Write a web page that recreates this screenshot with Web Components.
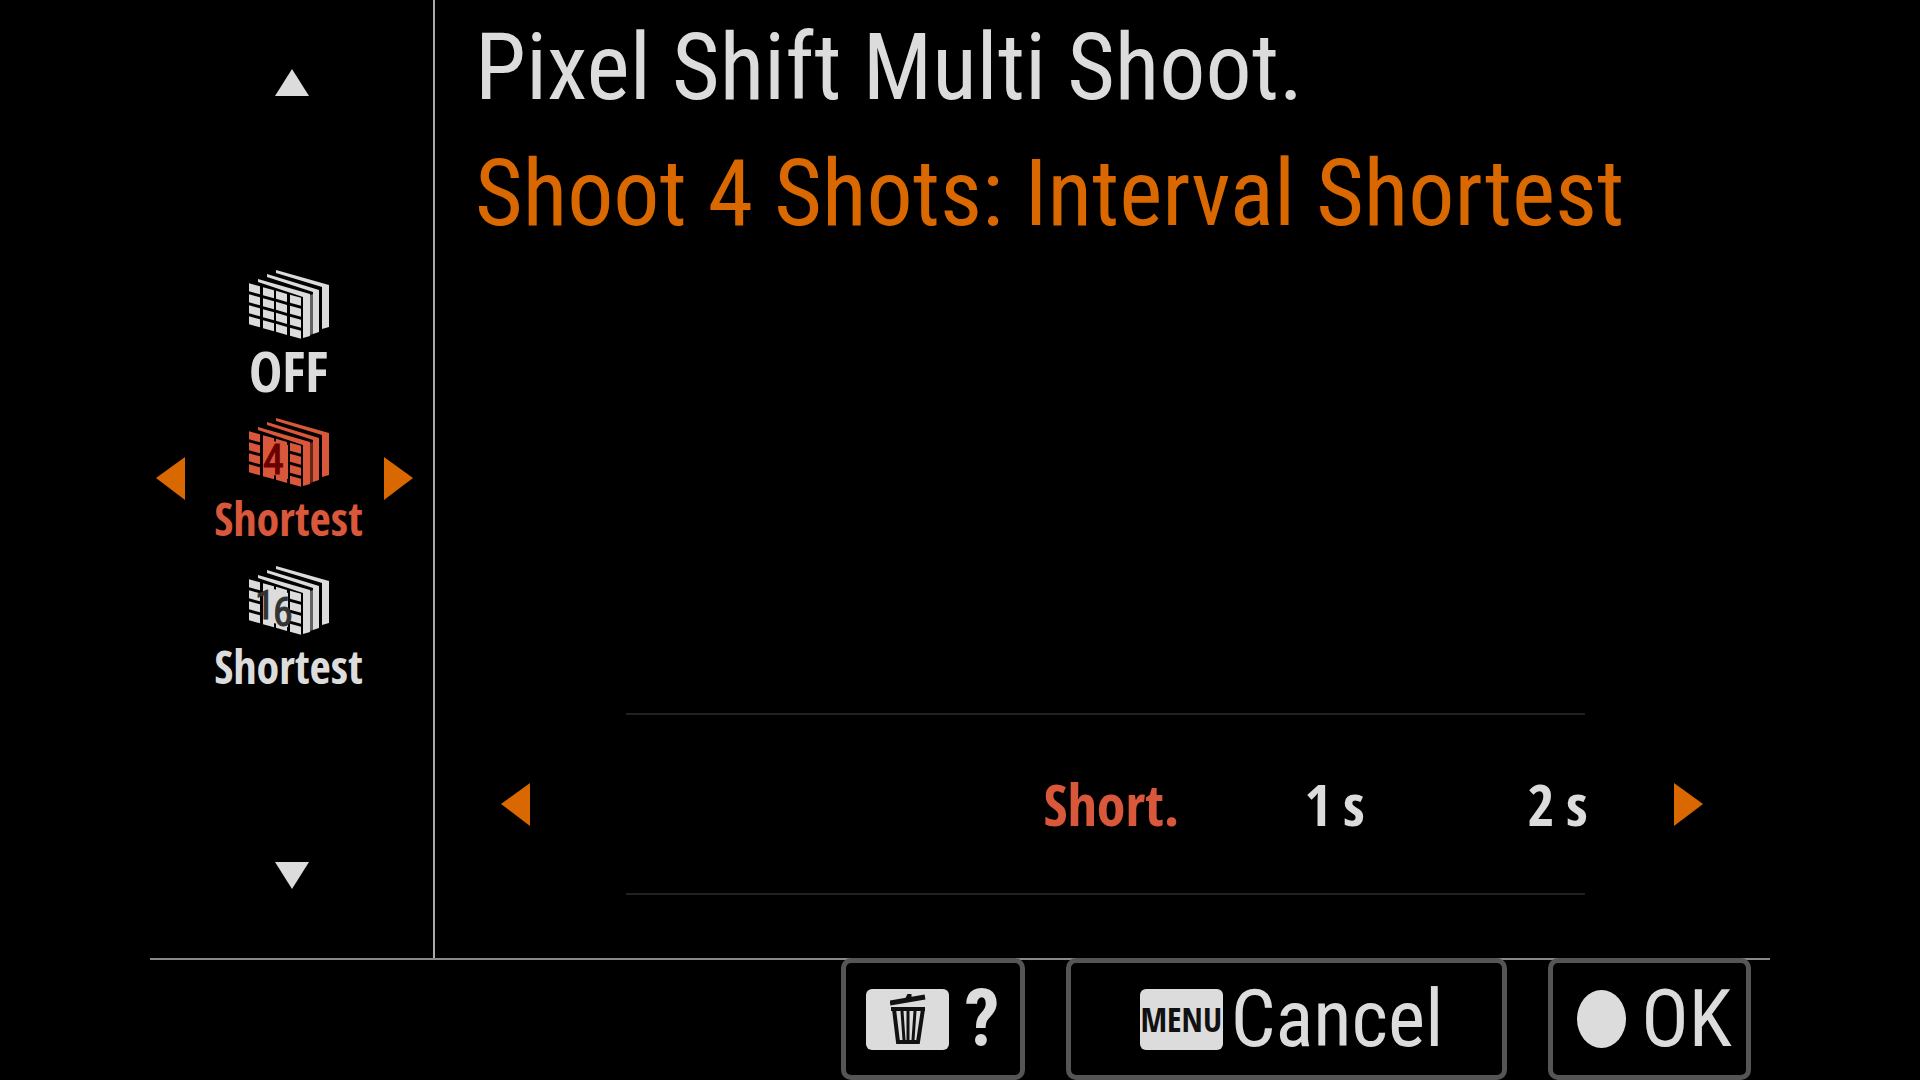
<!DOCTYPE html>
<html lang="en">
<head>
<meta charset="utf-8">
<title>Pixel Shift Multi Shoot.</title>
<style>
  body {
    margin: 0;
    background: #000;
    color: #dcdcdc;
    font-family: "Roboto Condensed", "Liberation Sans Narrow", "Liberation Sans", sans-serif;
    --label-font: "Open Sans Condensed", "Noto Sans Condensed", "Liberation Sans Narrow", sans-serif;
    --text: #dcdcdc;
    --orange: #d96800;
    --selected: #d9573a;
  }
</style>
</head>
<body>

<camera-menu>
  <mode-list slot="side">
    <mode-item label="OFF"></mode-item>
    <mode-item label="Shortest" shots="4" selected></mode-item>
    <mode-item label="Shortest" shots="16"></mode-item>
  </mode-list>
  <span slot="title">Pixel Shift Multi Shoot.</span>
  <span slot="subtitle">Shoot 4 Shots: Interval Shortest</span>
  <interval-picker slot="picker" values="Short.,1&thinsp;s,2&thinsp;s" selected="Short."></interval-picker>
  <key-button slot="keys" icon="trash" style="--width: 184px" strong>?</key-button>
  <key-button slot="keys" icon="menu" style="--width: 441px">Cancel</key-button>
  <key-button slot="keys" icon="dot" style="--width: 203px">OK</key-button>
</camera-menu>

<script>
/**
 * Triangle button, direction = up | down | left | right
 */
class ArrowButton extends HTMLElement {
  constructor() {
    super();
    this.attachShadow({ mode: 'open' });
  }

  connectedCallback() {
    const direction = this.getAttribute('direction') || 'left';
    const shapes = {
      up: [34, 27, '17,0 34,27 0,27'],
      down: [34, 27, '0,0 34,0 17,27'],
      left: [29, 43, '29,0 29,43 0,21'],
      right: [29, 43, '0,0 29,21 0,43']
    };
    const [w, h, points] = shapes[direction];

    this.shadowRoot.innerHTML = `
      <style>
        :host {
          display: block;
          color: var(--orange);
        }

        button {
          display: block;
          padding: 0;
          border: 0;
          background: none;
          color: inherit;
          cursor: pointer;
        }

        svg {
          display: block;
        }
      </style>
      <button type="button" aria-label="${direction}">
        <svg width="${w}" height="${h}" viewBox="0 0 ${w} ${h}" fill="currentColor"><polygon points="${points}"/></svg>
      </button>
    `;
  }
}

/**
 * Stack of frames with a 4x4 pixel grid on the front one
 */
class ShotsIcon extends HTMLElement {
  constructor() {
    super();
    this.attachShadow({ mode: 'open' });
  }

  connectedCallback() {
    const shots = this.getAttribute('shots') || '';
    const columns = [[1, 12], [15, 26], [28, 39], [42, 53]];
    const edge = x => 13 + x * 0.28;
    let cells = '';

    columns.forEach(([x1, x2]) => {
      for (let row = 0; row < 4; row++) {
        const y = row * 11;
        cells += `M${x1} ${edge(x1) + y}L${x2} ${edge(x2) + y}V${edge(x2) + y + 8}L${x1} ${edge(x1) + y + 8}Z`;
      }
    });

    const number = {
      '4': '<text x="15" y="56" font-size="42">4</text>',
      '16': '<text x="7" y="53" font-size="40">1</text><text x="25" y="60" font-size="40">6</text>'
    }[shots] || '';

    this.shadowRoot.innerHTML = `
      <style>
        :host {
          display: block;
        }

        svg {
          display: block;
        }

        text {
          font-family: "Roboto Condensed", sans-serif;
          fill: var(--number, #333);
          stroke: var(--number, #333);
        }
      </style>
      <svg width="81" height="71" viewBox="0 0 81 71" fill="currentColor">
        <path d="${cells}"/>
        <path d="M10 9L62 24V66L55 68V27L10 12Z"/>
        <path d="M19 4L71 20V62L65 64V22L19 7Z"/>
        <path d="M28 0L81 15V57L74 59V17L28 3Z"/>
        <path d="M62 25L65 24V64L62 65Z" opacity=".45"/>
        ${number ? '<path d="M15 20L40 27V61L15 54Z"/>' : ''}
        ${number}
      </svg>
    `;
  }
}

class ModeItem extends HTMLElement {
  constructor() {
    super();
    this.attachShadow({ mode: 'open' });
  }

  connectedCallback() {
    const selected = this.hasAttribute('selected');

    this.shadowRoot.innerHTML = `
      <style>
        :host {
          display: grid;
          grid-template-columns: 29px 1fr 29px;
          align-items: center;
          padding: 0 20px 0 6px;
        }

        :host([selected]) {
          --number: #6a0000;
        }

        .mode {
          grid-area: 1 / 2;
          display: flex;
          flex-direction: column;
          align-items: center;
          padding: 0 0 0 8px;
          border: 0;
          background: none;
          color: var(--text);
          font-family: var(--label-font);
          font-size: 56px;
          line-height: 58px;
          cursor: pointer;
        }

        /* longer labels sit under the numbered icons */
        :host([shots]) .mode {
          font-size: 46px;
        }

        :host([selected]) .mode {
          color: var(--selected);
        }

        arrow-button {
          grid-area: 1 / 1;
          margin-bottom: 8px;
        }

        arrow-button[direction="right"] {
          grid-area: 1 / 3;
        }
      </style>
      ${selected ? '<arrow-button direction="left"></arrow-button>' : ''}
      <button class="mode" type="button" aria-pressed="${selected}">
        <shots-icon shots="${this.getAttribute('shots') || ''}"></shots-icon>
        <span>${this.getAttribute('label')}</span>
      </button>
      ${selected ? '<arrow-button direction="right"></arrow-button>' : ''}
    `;
  }
}

class ModeList extends HTMLElement {
  constructor() {
    super();
    this.attachShadow({ mode: 'open' });
  }

  connectedCallback() {
    this.shadowRoot.innerHTML = `
      <style>
        :host {
          display: flex;
          flex-direction: column;
          justify-content: space-between;
          box-sizing: border-box;
          height: 100%;
          padding: 69px 0;
        }

        .scroll {
          align-self: center;
          color: var(--text);
        }

        .items {
          display: flex;
          flex-direction: column;
          gap: 19px;
          padding-top: 6px;
        }
      </style>
      <arrow-button class="scroll" direction="up"></arrow-button>
      <div class="items"><slot></slot></div>
      <arrow-button class="scroll" direction="down"></arrow-button>
    `;
  }
}

class IntervalPicker extends HTMLElement {
  constructor() {
    super();
    this.attachShadow({ mode: 'open' });
  }

  connectedCallback() {
    const selected = this.getAttribute('selected');
    const values = this.getAttribute('values').split(',');

    this.shadowRoot.innerHTML = `
      <style>
        :host {
          display: block;
        }

        hr {
          height: 2px;
          margin: 0 118px 0 125px;
          border: 0;
          background: #222;
        }

        .row {
          display: flex;
          align-items: center;
          height: 178px;
        }

        .values {
          flex: 1;
          display: grid;
          grid-template-columns: repeat(5, 1fr);
          padding: 0 5px 0 24px;
        }

        .values button {
          padding: 0;
          border: 0;
          background: none;
          color: var(--text);
          font-family: var(--label-font);
          font-size: 58px;
          line-height: 64px;
          cursor: pointer;
        }

        .values button:first-child {
          grid-column: 3;
        }

        .values button[aria-pressed="true"] {
          color: var(--selected);
        }
      </style>
      <hr>
      <div class="row">
        <arrow-button direction="left"></arrow-button>
        <div class="values">
          ${values.map(value => `<button type="button" aria-pressed="${value === selected}">${value}</button>`).join('')}
        </div>
        <arrow-button direction="right"></arrow-button>
      </div>
      <hr>
    `;
  }
}

class KeyButton extends HTMLElement {
  constructor() {
    super();
    this.attachShadow({ mode: 'open' });
  }

  connectedCallback() {
    const icons = {
      trash: `
        <span class="badge">
          <svg width="36" height="50" viewBox="0 0 36 50" fill="none" stroke="#111">
            <path d="M0 9L35 3" stroke-width="5"/>
            <path d="M16 4L18 0H21V4" fill="#111"/>
            <path d="M1 15H35" stroke-width="4"/>
            <path d="M4 15L8 48H28L33 15" stroke-width="4"/>
            <path d="M12 17L14 46M18 17V46M25 17L23 46" stroke-width="3"/>
          </svg>
        </span>`,
      menu: '<span class="badge">MENU</span>',
      dot: '<svg width="49" height="58" viewBox="0 0 49 58" fill="currentColor"><ellipse cx="24.5" cy="29" rx="24.5" ry="29"/></svg>'
    };

    this.shadowRoot.innerHTML = `
      <style>
        :host {
          display: block;
          width: var(--width);
        }

        button {
          display: flex;
          align-items: center;
          justify-content: center;
          gap: 15px;
          box-sizing: border-box;
          width: 100%;
          height: 122px;
          padding: 0 0 0 10px;
          border: 5px solid #555;
          border-radius: 10px;
          background: #000;
          color: var(--text);
          font-family: inherit;
          font-size: 79px;
          line-height: 96px;
          cursor: pointer;
        }

        :host([icon="menu"]) button {
          gap: 8px;
        }

        :host([strong]) button {
          padding: 0;
          font-weight: bold;
        }

        svg {
          display: block;
        }

        .badge {
          display: flex;
          align-items: center;
          justify-content: center;
          width: 83px;
          height: 61px;
          border-radius: 6px;
          background: var(--text);
          color: #111;
          font-family: var(--label-font);
          font-size: 34px;
          line-height: 61px;
        }
      </style>
      <button type="button">${icons[this.getAttribute('icon')] || ''}<span><slot></slot></span></button>
    `;
  }
}

class CameraMenu extends HTMLElement {
  constructor() {
    super();
    this.attachShadow({ mode: 'open' });
  }

  connectedCallback() {
    this.shadowRoot.innerHTML = `
      <style>
        :host {
          display: grid;
          grid-template-columns: 285px minmax(0, 1fr);
          grid-template-rows: 1fr auto;
          min-height: 100vh;
          padding: 0 150px;
        }

        aside {
          box-sizing: border-box;
          border-right: 2px solid #aaa;
        }

        main {
          display: flex;
          flex-direction: column;
          padding: 5px 67px 63px 66px;
        }

        h1, h2 {
          margin: 0 0 0 -26px;
          font-size: 92px;
          font-weight: normal;
          line-height: 126px;
          white-space: nowrap;
        }

        h1 {
          color: var(--text);
        }

        h2 {
          color: var(--orange);
        }

        .picker {
          margin-top: auto;
        }

        footer {
          grid-column: 1 / -1;
          display: flex;
          justify-content: flex-end;
          gap: 41px;
          padding-right: 19px;
          border-top: 2px solid #888;
        }

        footer ::slotted(*) {
          margin-top: -2px;
        }
      </style>
      <aside><slot name="side"></slot></aside>
      <main>
        <h1><slot name="title"></slot></h1>
        <h2><slot name="subtitle"></slot></h2>
        <div class="picker"><slot name="picker"></slot></div>
      </main>
      <footer><slot name="keys"></slot></footer>
    `;
  }
}

customElements.define('arrow-button', ArrowButton);
customElements.define('shots-icon', ShotsIcon);
customElements.define('mode-item', ModeItem);
customElements.define('mode-list', ModeList);
customElements.define('interval-picker', IntervalPicker);
customElements.define('key-button', KeyButton);
customElements.define('camera-menu', CameraMenu);
</script>
</body>
</html>
